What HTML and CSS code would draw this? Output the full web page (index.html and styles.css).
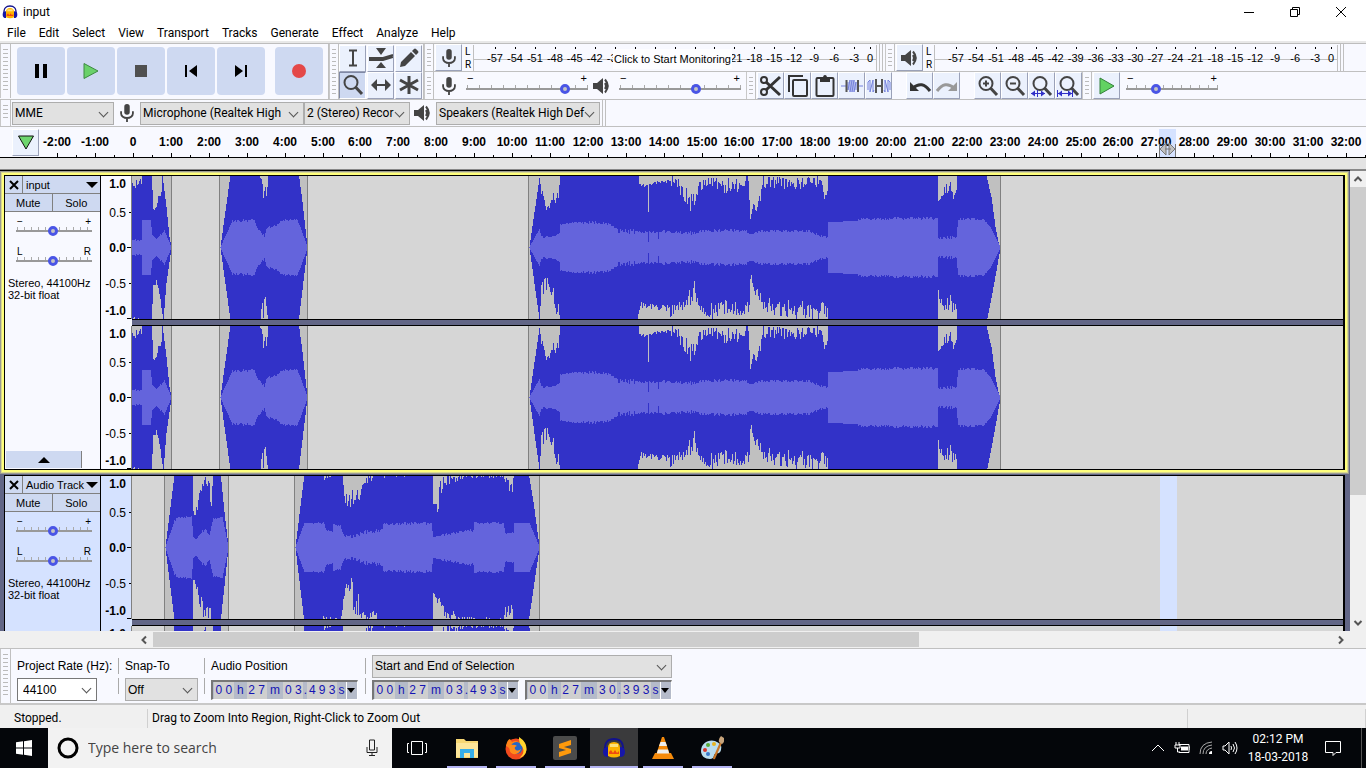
FILE: index.html
```html
<!DOCTYPE html>
<html lang="en">
<head>
<meta charset="utf-8">
<title>input</title>
<link rel="stylesheet" href="styles.css">
</head>
<body>
<svg class="defs" aria-hidden="true">
  <symbol id="mic" viewBox="0 0 20 22"><rect x="7" y="1" width="6" height="12" rx="3" fill="#444"/><path d="M3.500 9v2.500a6.500 5 0 0 0 13 0V9M10 16v5" fill="none" stroke="#444" stroke-width="2"/></symbol>
  <symbol id="speaker" viewBox="0 0 20 20"><path d="M1 7h4l6-5v16l-6-5H1z" fill="#444"/><path d="M13 7q2 3 0 6M13 3.500q5.500 6.500 0 13" fill="none" stroke="#444" stroke-width="2"/></symbol>
  <symbol id="logo" viewBox="0 0 24 24"><path d="M6 20V12q0-6 6-6t6 6v8q-6 3-12 0z" fill="#ffb400"/><path d="M7 16l2-2 2 3 2-3 2 3 2-2v3H7z" fill="#f04a10"/><path d="M8 8h8v3H8z" fill="#ffe27a"/><path d="M3 16C2 5 7 3 12 3s10 2 9 13" fill="none" stroke="#12128c" stroke-width="2"/><path d="M6 11v10q-5 0-5-5t5-5zM18 11v10q5 0 5-5t-5-5z" fill="#1616a8"/></symbol>
  <symbol id="lens" viewBox="0 0 24 24"><circle cx="10" cy="9.500" r="6.500" fill="none" stroke="#444" stroke-width="2"/><path d="M14.500 14l6.500 7" stroke="#444" stroke-width="3"/></symbol>
  <symbol id="play" viewBox="0 0 16 18"><path d="M1 1l14 8-14 8z" fill="#62d262" stroke="#33803a"/></symbol>
</svg>

<header class="titlebar">
  <svg class="title-logo"><use href="#logo"/></svg>
  <span class="title-text">input</span>
  <button class="win" aria-label="Minimize"><svg viewBox="0 0 12 12"><path d="M1 6.500h10" stroke="#000"/></svg></button>
  <button class="win" aria-label="Restore"><svg viewBox="0 0 12 12"><path d="M1.500 3.500h7v7h-7zM3.500 3V1.500h7v7H9" fill="none" stroke="#000"/></svg></button>
  <button class="win" aria-label="Close"><svg viewBox="0 0 12 12"><path d="M1 1l10 10M11 1L1 11" stroke="#000"/></svg></button>
</header>
<nav class="menu">
  <button>File</button><button>Edit</button><button>Select</button><button>View</button><button>Transport</button><button>Tracks</button><button>Generate</button><button>Effect</button><button>Analyze</button><button>Help</button>
</nav>

<section class="upper">
  <div class="bar transport">
    <i class="grip"></i>
    <button class="big" aria-label="Pause"><svg viewBox="0 0 24 24"><path d="M6 5h4v14H6zM14 5h4v14h-4z"/></svg></button>
    <button class="big" aria-label="Play"><svg viewBox="0 0 24 24"><path d="M5 4.500L19 12 5 19.500z" fill="#6ad16a" stroke="#3d8a42"/></svg></button>
    <button class="big" aria-label="Stop"><svg viewBox="0 0 24 24"><path d="M6 6h12v12H6z" fill="#505050"/></svg></button>
    <button class="big" aria-label="Skip to start"><svg viewBox="0 0 24 24"><path d="M6 6h2v12H6zM18 6v12l-8-6z"/></svg></button>
    <button class="big" aria-label="Skip to end"><svg viewBox="0 0 24 24"><path d="M16 6h2v12h-2zM6 6v12l8-6z"/></svg></button>
    <button class="big rec" aria-label="Record"><svg viewBox="0 0 24 24"><circle cx="12" cy="12" r="7" fill="#e44848"/></svg></button>
  </div>
  <div class="bar tools">
    <i class="grip"></i>
    <div class="toolgrid">
      <button class="tb" aria-label="Selection tool"><svg viewBox="0 0 24 24"><path d="M8 4.500h8M8 19.500h8M12 5v14" stroke="#444" stroke-width="2" fill="none"/></svg></button>
      <button class="tb" aria-label="Envelope tool"><svg viewBox="0 0 24 24"><path d="M0 12h14l10-3M0 14h14l10-3" stroke="#444" stroke-width="2" fill="none"/><path d="M7 2h10l-5 7zM7 22h10l-5-6z" fill="#444"/></svg></button>
      <button class="tb" aria-label="Draw tool"><svg viewBox="0 0 24 24"><path d="M3 21l1-5L14 6l4 4L8 20zM15 5l2-2q1-1 2 0l2 2q1 1 0 2l-2 2z" fill="#444"/></svg></button>
      <button class="tb on" aria-label="Zoom tool"><svg><use href="#lens"/></svg></button>
      <button class="tb" aria-label="Time shift tool"><svg viewBox="0 0 24 24"><path d="M6 12h12" stroke="#444" stroke-width="2"/><path d="M8 6v12l-6-6zM16 6v12l6-6z" fill="#444"/></svg></button>
      <button class="tb" aria-label="Multi-tool"><svg viewBox="0 0 24 24"><path d="M12 3v18M3 7l18 10M21 7L3 17" stroke="#444" stroke-width="3"/></svg></button>
    </div>
  </div>
  <div class="stack">
    <div class="line">
      <i class="grip"></i>
      <button class="tb" aria-label="Record meter"><svg class="mid"><use href="#mic"/></svg></button>
      <div class="lr"><span>L</span><span>R</span></div>
      <div class="meter" data-meter><button class="monitor">Click to Start Monitoring</button></div>
      <i class="endcap"></i>
      <i class="grip"></i>
      <button class="tb" aria-label="Playback meter"><svg class="mid"><use href="#speaker"/></svg></button>
      <div class="lr"><span>L</span><span>R</span></div>
      <div class="meter" data-meter></div>
      <i class="endcap"></i>
    </div>
    <div class="line">
      <i class="grip"></i>
      <svg class="ico"><use href="#mic"/></svg>
      <label class="slider wide"><span>−</span><span>+</span><input type="range" value="84" aria-label="Recording volume"></label>
      <svg class="ico"><use href="#speaker"/></svg>
      <label class="slider wide"><span>−</span><span>+</span><input type="range" value="64" aria-label="Playback volume"></label>
      <i class="grip edit-grip"></i>
      <button class="tb" aria-label="Cut"><svg viewBox="0 0 24 24"><g fill="none" stroke="#333" stroke-width="2"><circle cx="5" cy="6" r="3"/><circle cx="5" cy="18" r="3"/><path d="M7 8l14 13M7 16L21 3" stroke-width="3"/></g></svg></button>
      <button class="tb" aria-label="Copy"><svg viewBox="0 0 24 24"><path d="M3 18V2h14" fill="none" stroke="#333" stroke-width="2"/><rect x="7" y="6" width="14" height="16" rx="1" fill="none" stroke="#333" stroke-width="2"/></svg></button>
      <button class="tb" aria-label="Paste"><svg viewBox="0 0 24 24"><rect x="3.500" y="4" width="17" height="18" rx="1" fill="none" stroke="#333" stroke-width="2"/><path d="M7 4h3q0-3 2-3t2 3h3v4H7z" fill="#333"/></svg></button>
      <button class="tb" aria-label="Trim"><svg viewBox="0 0 24 24"><path d="M1 12h6M17 12h6M8 8v8l2-10v12l2-12v12l2-12v12l2-10v8" stroke="#7481dd" stroke-width="1" fill="none"/><path d="M6.500 6v12M18 6v12" stroke="#555" stroke-width="2"/></svg></button>
      <button class="tb" aria-label="Silence"><svg viewBox="0 0 24 24"><path d="M1 16V8l2-2v12l3-12v12l1-2M23 16V8l-2-2v12L18 6v12l-1-2" stroke="#7481dd" fill="none"/><path d="M9 5v14M15 5v14M9 12h6" stroke="#555" stroke-width="2"/></svg></button>
      <span class="gap"></span>
      <button class="tb" aria-label="Undo"><svg viewBox="0 0 24 24"><path d="M5 14Q14 6 22 17" fill="none" stroke="#333" stroke-width="3"/><path d="M2 8v9h9z" fill="#333"/></svg></button>
      <button class="tb" aria-label="Redo"><svg viewBox="0 0 24 24"><path d="M19 14Q10 6 2 17" fill="none" stroke="#999" stroke-width="3"/><path d="M22 8v9h-9z" fill="#999"/></svg></button>
      <span class="gap"></span>
      <button class="tb" aria-label="Zoom in"><svg><use href="#lens"/><path d="M7 9.500h6M10 6.500v6" stroke="#444" stroke-width="2"/></svg></button>
      <button class="tb" aria-label="Zoom out"><svg><use href="#lens"/><path d="M7 9.500h6" stroke="#444" stroke-width="2"/></svg></button>
      <button class="tb" aria-label="Fit selection"><svg><use href="#lens"/><path d="M1 19.500h14M7.500 16v7" stroke="#3030c8"/><path d="M1 19.500l4-3v6zM15 19.500l-4-3v6z" fill="#3030c8"/></svg></button>
      <button class="tb" aria-label="Fit project"><svg><use href="#lens"/><path d="M1 19.500h14M.5 16v7M15.500 16v7" stroke="#3030c8"/><path d="M1 19.500l4-3v6zM15 19.500l-4-3v6z" fill="#3030c8"/></svg></button>
      <i class="grip"></i>
      <button class="tb" aria-label="Play at speed"><svg class="small"><use href="#play"/></svg></button>
      <label class="slider speed"><span>−</span><span>+</span><input type="range" value="30" aria-label="Playback speed"></label>
    </div>
  </div>
</section>

<section class="devices">
  <i class="grip"></i>
  <label class="combo w-host"><select aria-label="Audio host"><option>MME</option></select></label>
  <svg class="ico"><use href="#mic"/></svg>
  <label class="combo w-dev"><select aria-label="Recording device"><option>Microphone (Realtek High</option></select></label>
  <label class="combo w-chan"><select aria-label="Recording channels"><option>2 (Stereo) Recor</option></select></label>
  <svg class="ico"><use href="#speaker"/></svg>
  <label class="combo w-dev"><select aria-label="Playback device"><option>Speakers (Realtek High Def</option></select></label>
  <i class="endcap"></i>
</section>

<section class="timeline">
  <button class="tb pin" aria-label="Pinned play head"><svg viewBox="0 0 24 24"><path d="M4.500 5h15L12 18z" fill="#6ed66e" stroke="#111"/></svg></button>
  <svg class="ruler" id="ruler"></svg>
</section>
<div class="strip"></div>

<main class="workspace">
  <div class="tracks">
    <article class="track focused">
      <div class="panel">
        <div class="head"><button aria-label="Close track"><svg viewBox="0 0 10 10"><path d="M1 1l8 8M9 1L1 9" stroke="#000" stroke-width="2"/></svg></button><button class="name">input<svg viewBox="0 0 12 6"><path d="M0 0h12L6 6z"/></svg></button></div>
        <div class="ms"><button>Mute</button><button>Solo</button></div>
        <label class="slider"><span>−</span><span>+</span><input type="range" value="49" aria-label="Gain"></label>
        <label class="slider"><span>L</span><span>R</span><input type="range" value="49" aria-label="Pan"></label>
        <p>Stereo, 44100Hz<br>32-bit float</p>
        <button class="fold" aria-label="Collapse"><svg viewBox="0 0 12 6"><path d="M0 6h12L6 0z"/></svg></button>
      </div>
      <div class="channels">
        <div class="channel"><svg class="scale"></svg><svg class="wave" data-wave="0"></svg></div>
        <div class="divider"></div>
        <div class="channel"><svg class="scale"></svg><svg class="wave" data-wave="0"></svg></div>
      </div>
    </article>
    <article class="track selected">
      <div class="panel">
        <div class="head"><button aria-label="Close track"><svg viewBox="0 0 10 10"><path d="M1 1l8 8M9 1L1 9" stroke="#000" stroke-width="2"/></svg></button><button class="name">Audio Track<svg viewBox="0 0 12 6"><path d="M0 0h12L6 6z"/></svg></button></div>
        <div class="ms"><button>Mute</button><button>Solo</button></div>
        <label class="slider"><span>−</span><span>+</span><input type="range" value="49" aria-label="Gain"></label>
        <label class="slider"><span>L</span><span>R</span><input type="range" value="49" aria-label="Pan"></label>
        <p>Stereo, 44100Hz<br>32-bit float</p>
      </div>
      <div class="channels">
        <div class="channel"><svg class="scale"></svg><svg class="wave" data-wave="1"></svg></div>
        <div class="divider"></div>
        <div class="channel"><svg class="scale"></svg><svg class="wave" data-wave="1"></svg></div>
      </div>
    </article>
  </div>
  <div class="vscroll">
    <svg viewBox="0 0 10 10"><path d="M1.500 7L5 3.500 8.500 7"/></svg>
    <div class="lane"><div class="vthumb"></div></div>
    <svg viewBox="0 0 10 10"><path d="M1.500 3L5 6.500 8.500 3"/></svg>
  </div>
</main>
<div class="hscroll">
  <svg viewBox="0 0 10 10"><path d="M7 1.500L3.500 5 7 8.500"/></svg>
  <div class="lane"><div class="hthumb"></div></div>
  <svg viewBox="0 0 10 10"><path d="M3 1.500L6.500 5 3 8.500"/></svg>
</div>

<section class="selbar">
  <i class="grip"></i>
  <div class="field rate"><label for="rate">Project Rate (Hz):</label><span class="combo white"><select id="rate"><option>44100</option></select></span></div>
  <i class="sep"></i>
  <div class="field snap"><label for="snap">Snap-To</label><span class="combo"><select id="snap"><option>Off</option></select></span></div>
  <i class="sep"></i>
  <div class="field pos"><span>Audio Position</span><div class="time" data-time="00h27m03.493s"></div></div>
  <i class="sep"></i>
  <div class="field range">
    <label class="combo"><select aria-label="Selection format"><option>Start and End of Selection</option></select></label>
    <div class="pair"><div class="time" data-time="00h27m03.493s"></div><div class="time" data-time="00h27m30.393s"></div></div>
  </div>
</section>
<footer class="status"><span class="state">Stopped.</span><span class="hint">Drag to Zoom Into Region, Right-Click to Zoom Out</span><span class="rest"></span></footer>

<nav class="taskbar">
  <button class="start" aria-label="Start"><svg viewBox="0 0 16 16"><path d="M0 2.300l7-1v6.200H0zM8 1.200L16 0v7.500H8zM0 8.500h7v6.200l-7-1zM8 8.500h8V16l-8-1.200z" fill="#fff"/></svg></button>
  <label class="search">
    <svg class="ring" viewBox="0 0 22 22"><circle cx="11" cy="11" r="9" fill="none" stroke="#000" stroke-width="3"/></svg>
    <input type="text" placeholder="Type here to search" aria-label="Search">
    <svg class="smic" viewBox="0 0 12 18"><path d="M3.500 1h5v10h-5zM1 8v5.500h10V8M6 14v3M3 16.500h6" fill="none" stroke="#222"/></svg>
  </label>
  <button class="app plain" aria-label="Task View"><svg viewBox="0 0 24 24"><path d="M6.500 5.500h11v13h-11zM4 7.500H2.500v9H4M20 7.500h1.500v9H20" fill="none" stroke="#fff"/></svg></button>
  <button class="app" aria-label="File Explorer"><svg viewBox="0 0 24 24"><path d="M1 3h8l2 2h12v17H1z" fill="#f7d774"/><path d="M1 7h22v14H1z" fill="#fde69a"/><path d="M5 22v-9h14v9h-4v-5H9v5z" fill="#37aee8"/></svg></button>
  <button class="app" aria-label="Firefox"><svg viewBox="0 0 24 24"><circle cx="12" cy="13" r="10.500" fill="#f24a1d"/><path d="M2 10Q3 4 6 3l2 3q5-3 9 2 3 5-1 8Q9 20 6 13 3 10 2 10z" fill="#ff8418"/><circle cx="12.500" cy="12" r="6" fill="#2565c7"/><path d="M6 9q5-1 7 1-3 1-2 3 2 3 6 0-2 6-8 5-5-2-3-9z" fill="#ff8c1a"/><path d="M15 1q8 5 7.500 13-1 6-7 8 6-5 3-11-4-4-3.500-10z" fill="#ffd52e"/></svg></button>
  <button class="app" aria-label="Sublime Text"><svg viewBox="0 0 24 24"><rect width="24" height="24" rx="2" fill="#4b4b4b"/><path d="M6 8l12-4v5l-7 2 7 2v4L6 21v-5l7-2-7-2z" fill="#ff9a0c"/></svg></button>
  <button class="app active" aria-label="Audacity"><svg><use href="#logo"/></svg></button>
  <button class="app" aria-label="VLC"><svg viewBox="0 0 24 24"><path d="M4 17h16l3 6H1z" fill="#f58a0b"/><path d="M11 1h2l6 18q-7 3-14 0z" fill="#f58a0b"/><path d="M9.500 6h5l1.500 4H8zM7 13.500h10l1.200 4H5.800z" fill="#eee"/></svg></button>
  <button class="app" aria-label="Paint"><svg viewBox="0 0 24 24"><path d="M1 15C1 7 9 3 15 5q8 3 6 9c-1 4-4 3-6 4s0 5-5 5-9-3-9-8z" fill="#b9dcee"/><circle cx="5" cy="14" r="2" fill="#d9342b"/><circle cx="8" cy="9" r="2" fill="#59ac38"/><circle cx="14" cy="8" r="2" fill="#e8b320"/><circle cx="8" cy="18" r="2" fill="#3a79c9"/><path d="M20 6l2 1-7 16q-2 1-2-1z" fill="#c87628"/><path d="M19 6q-1-3 2-6l3 2q1 4-2 6z" fill="#c7a47c"/></svg></button>
  <div class="tray">
    <svg viewBox="0 0 16 16"><path d="M2 11l6-6 6 6" class="ln"/></svg>
    <svg viewBox="0 0 16 16"><path d="M5 4.500h10v8H5M15 7h1v3M2 2v3M5 2v3M1 5h5v3H1zM3.500 8v4H6" class="ln"/><path d="M7 6.500h7v4H7z" fill="#fff"/></svg>
    <svg viewBox="0 0 16 16"><path d="M2 14Q2 3 14 2M5 14q0-8 9-9M8 14q0-5 6-6" class="ln dim"/><path d="M11 14q0-3 3-3v3z" fill="#fff"/></svg>
    <svg viewBox="0 0 16 16"><path d="M1 6h2l4-4v12l-4-4H1zM9 6q1 2 0 4M11 4q3 4 0 8M13 2q4 6 0 12" class="ln"/></svg>
    <div class="clock"><span>02:12 PM</span><span>18-03-2018</span></div>
    <svg viewBox="0 0 16 16"><path d="M.5 1.500h15v11H11l-3 3v-3H.5z" class="ln"/></svg>
    <i class="peek"></i>
  </div>
</nav>
<script src="app.js"></script>
</body>
</html>
```
FILE: styles.css
```css
* { box-sizing: border-box; }
body { margin: 0; height: 100vh; display: flex; flex-direction: column; overflow: hidden; background: #fff; color: #000; font: 12px/16px Roboto, "Open Sans", sans-serif; }
button, select, input { font: inherit; color: inherit; margin: 0; padding: 0; border: 0; border-radius: 0; background: none; }
button svg, .ico { display: block; }
body > * { flex: none; }
.defs { position: absolute; width: 0; height: 0; }

.titlebar { height: 24px; display: flex; align-items: center; padding-right: 2px; }
.title-logo { width: 16px; height: 16px; margin: 0 5px 0 2px; }
.title-text { flex: 1; }
.win { width: 46px; height: 22px; display: grid; place-items: center; }
.win svg { width: 12px; height: 12px; }
.menu { height: 19px; display: flex; align-items: center; border-bottom: 2px solid #e8e8e8; padding-left: 1px; }
.menu button { padding: 0 7px 0 6px; }

.upper { display: flex; background: #f8f9ff; border-top: 1px solid #bdbdbd; border-bottom: 1px solid #c0c0c0; height: 57px; }
.bar { display: flex; align-items: center; border-right: 1px solid #c0c0c0; }
.grip { flex: none; width: 10px; align-self: stretch; border-left: 1px solid #c8c8c8; border-right: 1px solid #c0c0c0; background: repeating-linear-gradient(#bbb 0 1px, transparent 1px 4px) content-box; padding: 5px 2px; }
.big { width: 48px; height: 48px; margin-right: 2px; border-radius: 4px; background: #ced9f1; display: grid; place-items: center; }
.big svg { width: 24px; height: 24px; }
.transport { padding-bottom: 1px; }
.transport .grip { margin-right: 6px; width: 11px; }
.rec { margin: 0 5px 0 8px; }
.toolgrid { display: grid; grid-template-columns: repeat(3, 28px); grid-template-rows: repeat(2, 27px); }
.tb { flex: none; width: 27px; height: 27px; display: grid; place-items: center; background: #ebf1fd; border: 1px solid #fff; border-right-color: #9aa1b8; border-bottom-color: #9aa1b8; }
.tb svg { width: 24px; height: 24px; }
.tb svg.small { width: 16px; height: 18px; }
.tb svg.mid { width: 20px; height: 20px; }
.tb.on { background: #ced9f1; border-color: #7f88a5 #fff #fff #7f88a5; }
.stack { flex: 1; display: flex; flex-direction: column; }
.line { flex: 1; display: flex; align-items: center; height: 27px; }
.line + .line { border-top: 1px solid #c0c0c0; }
.line .grip { margin-right: 1px; }
.lr { width: 11px; padding-left: 3px; display: flex; flex-direction: column; font-size: 10px; line-height: 13px; }
.meter { position: relative; width: 404px; height: 26px; border-left: 1px solid #c0c0c0; border-right: 1px solid #c0c0c0; padding: 0 0 0 11px; display: flex; background: linear-gradient(#c0c0c0, #c0c0c0) 0 14px / 100% 1px no-repeat; font: 11px/26px "Liberation Sans", sans-serif; }
.meter span { flex: 1; text-align: center; position: relative; }
.meter span:last-child { flex: 0 0 12px; }
.meter span::before { content: ""; position: absolute; top: 2px; left: 50%; width: 1px; height: 2px; background: #000; }
.monitor { position: absolute; z-index: 1; left: 139px; top: 4px; width: 119px; height: 20px; background: #fdfdff; font-size: 11px; line-height: 20px; white-space: nowrap; }
.endcap { width: 4px; align-self: stretch; border: solid #c0c0c0; border-width: 0 1px; margin: 0 2px; }
.ico { flex: none; width: 20px; height: 20px; margin: 0 7px 0 4px; }
.slider { flex: none; position: relative; width: 92px; height: 23px; display: grid; grid-template-columns: 1fr 1fr; padding: 0 1px; font: 11px/10px "Liberation Sans", sans-serif; background: linear-gradient(#999, #999) 0 15px / 100% 2px no-repeat, repeating-linear-gradient(90deg, #aaa 0 1px, transparent 1px 9px) 1px 12px / 100% 4px no-repeat; }
.slider.wide { width: 122px; background: linear-gradient(#999, #999) 0 15px / 100% 2px no-repeat, repeating-linear-gradient(90deg, #aaa 0 1px, transparent 1px 12px) 1px 12px / 100% 4px no-repeat; }
.slider.speed { margin-left: 6px; }
.slider span:nth-child(2) { text-align: right; }
.slider input { position: absolute; left: 0; top: 11px; width: 100%; height: 10px; appearance: none; }
.slider input::-webkit-slider-thumb { appearance: none; width: 10px; height: 10px; border: 3px solid #4a55e6; border-radius: 50%; background: #c4c4c4; }
.line .slider { height: 25px; }
.edit-grip { margin-left: 5px; }
.gap { width: 14px; }

.devices { height: 27px; display: flex; align-items: center; background: #f8f9ff; border-bottom: 1px solid #c0c0c0; }
.devices .grip { width: 11px; margin-right: 1px; }
.combo { display: block; position: relative; height: 23px; border: 1px solid #adadad; background: #e1e1e1; }
.combo select { display: block; width: 100%; height: 100%; appearance: none; padding: 0 14px 0 2px; overflow: hidden; }
.combo::after { content: ""; position: absolute; right: 6px; top: 6px; width: 6px; height: 6px; border: solid #555; border-width: 0 1px 1px 0; transform: rotate(45deg); pointer-events: none; }
.combo.white { background: #fff; border-color: #777; }
.devices .ico { margin: 0 3px; }
.w-host { width: 102px; }
.w-dev { width: 164px; }
.w-chan { width: 106px; }

.timeline { display: flex; background: #f8f9ff; height: 31px; border-bottom: 1px solid #000; padding: 2px 0 0 12px; }
.timeline .ruler { flex: 1; min-width: 0; height: 28px; font: bold 12px "Liberation Sans", sans-serif; }
.strip { height: 12px; background: #e3e3e3; border-bottom: 1px solid #888; }

.workspace { flex: 1; min-height: 0; display: flex; background: #626686; }
.tracks { flex: 1; min-width: 0; overflow: hidden; border-top: 1px solid #000; padding: 4px 5px 0 4px; }
.track { display: flex; border: 1px solid #000; border-right-width: 2px; margin-bottom: 5px; background: #f8f9ff; }
.focused { box-shadow: 0 0 0 2px #ffff7c, 0 0 0 3px #d8d890, 0 0 0 4px #9c9c94; }
.selected, .selected .scale { background: #d5e2ff; }
.panel { flex: none; width: 96px; border-right: 1px solid #000; display: flex; flex-direction: column; font: 11px/12px "Liberation Sans", sans-serif; }
.head, .ms { display: grid; height: 18px; border-bottom: 1px solid #808080; }
.head { grid-template-columns: 18px 1fr; }
.ms { grid-template-columns: 1fr 1fr; }
.head button, .ms button { background: #ced9f1; border-right: 1px solid #808080; }
.head button { display: flex; align-items: center; justify-content: center; }
.head button svg { width: 10px; height: 10px; }
.head .name { justify-content: space-between; padding: 0 2px 0 3px; border-right: 0; white-space: nowrap; }
.head .name svg { width: 12px; height: 6px; }
.ms button:last-child { border-right: 0; }
.panel .slider { width: 76px; margin: 5px 0 2px 11px; height: 23px; background: linear-gradient(#999, #999) 0 13px / 100% 2px no-repeat, repeating-linear-gradient(90deg, #aaa 0 1px, transparent 1px 7px) 1px 10px / 100% 4px no-repeat; font-size: 10px; }
.panel .slider input { top: 9px; }
.panel p { margin: 5px 3px; }
.fold { width: 76px; height: 17px; margin: auto 0 1px 1px; background: #ced9f1; border-right: 1px solid #808080; display: grid; place-items: center; }
.fold svg { width: 12px; height: 6px; }
.channels { flex: 1; min-width: 0; }
.channel { display: flex; height: 143px; }
.scale { flex: none; width: 31px; height: 143px; border-right: 1px solid #808080; background: #f8f9ff; font: 12px "Liberation Sans", sans-serif; }
.scale .b { font-weight: bold; }
.wave { flex: 1; min-width: 0; height: 143px; background: #d6d6d6; }
.divider { height: 7px; margin-left: 31px; background: #626686; border: solid #000; border-width: 1px 0; }
.vscroll { width: 16px; border-top: 1px solid #888; background: #f0f0f0; display: flex; flex-direction: column; align-items: center; padding: 3px 0; }
.vscroll svg, .hscroll svg { flex: none; width: 10px; height: 10px; fill: none; stroke: #555; stroke-width: 2; }
.vscroll .lane { flex: 1; width: 100%; padding: 3px 0; }
.vthumb { height: 72%; background: #cdcdcd; }
.hscroll { height: 17px; background: #f0f0f0; display: flex; align-items: center; padding: 0 20px 0 139px; }
.hscroll .lane { flex: 1; height: 15px; padding: 0 4px; }
.hthumb { height: 100%; width: 65%; background: #cdcdcd; }

.selbar { height: 57px; display: flex; background: #f8f9ff; border-top: 1px solid #c0c0c0; border-bottom: 2px solid #c8c8c8; font: 12px/16px "Liberation Sans", sans-serif; }
.selbar .grip { width: 11px; margin-right: 6px; }
.field { display: grid; grid-template-rows: 24px 23px; align-items: center; padding-top: 5px; align-content: start; white-space: nowrap; }
.rate { width: 95px; }
.rate .combo { width: 80px; }
.rate select { padding-left: 5px; }
.snap { width: 73px; }
.sep { width: 1px; margin: 9px 6px; background: linear-gradient(#aaa, #aaa) 0 0 / 1px 16px no-repeat, linear-gradient(#aaa, #aaa) 0 100% / 1px 16px no-repeat; }
.pos { width: 148px; }
.range { width: 300px; }
.pair { display: flex; justify-content: space-between; }
.time { width: 147px; height: 20px; display: flex; padding: 0 1px; background: #b5bbc9; border: solid #777; border-width: 2px 1px 1px 2px; border-color: #777 #fff #fff #777; color: #1414b4; line-height: 17px; text-align: center; font-size: 12px; }
.time b { font-weight: normal; width: 10px; background: #cfcfcf; }
.time i { font-style: normal; width: 13px; }
.time .m { width: 17px; }
.time .dot { width: 4px; }
.time .s { width: 9px; }
.time button { width: 10px; display: grid; place-items: center; border-left: 1px solid #fff; }
.time button svg { width: 8px; height: 5px; }

.status { height: 23px; display: flex; align-items: center; background: #f0f0f0; line-height: 19px; padding-top: 3px; }
.state { width: 148px; padding-left: 14px; border-right: 1px solid #d0d0d0; }
.hint { flex: 1; padding-left: 4px; }
.rest { width: 179px; height: 19px; border: solid #d0d0d0; border-width: 0 1px; }

.taskbar { height: 40px; display: flex; background: #04060a; color: #fff; }
.start { width: 48px; display: grid; place-items: center; }
.start svg { width: 16px; height: 16px; }
.search { width: 344px; display: flex; align-items: center; background: #f2f2f2; padding: 0 14px 0 9px; }
.search input { flex: 1; min-width: 0; padding-left: 9px; font: 14px/20px "Open Sans", sans-serif; outline: 0; }
.search input::placeholder { color: #444; opacity: 1; }
.ring { width: 22px; height: 22px; }
.smic { width: 12px; height: 18px; }
.app { width: 48px; margin-right: 1px; display: grid; place-items: center; background: linear-gradient(#b4b4f2, #b4b4f2) 50% 100% / 40px 2px no-repeat; }
.app.plain { background: none; width: 50px; }
.app.active { background: linear-gradient(#b4b4f2, #b4b4f2) 0 100% / 100% 2px no-repeat #3a3a3c; }
.app svg { width: 24px; height: 24px; }
.tray { margin-left: auto; display: flex; align-items: center; gap: 8px; }
.tray svg { width: 16px; height: 16px; }
.ln { fill: none; stroke: #fff; }
.dim { stroke: #aaa; }
.clock { display: flex; flex-direction: column; align-items: center; width: 64px; line-height: 18px; }
.clock + svg { margin-left: 7px; }
.peek { width: 5px; height: 40px; margin-left: 12px; border-left: 1px solid #555; }
```
FILE: app.js
```js
const NS = 'http://www.w3.org/2000/svg';
function add(parent, tag, attrs, text) {
  const el = document.createElementNS(NS, tag);
  for (const k in attrs) el.setAttribute(k, attrs[k]);
  if (text !== undefined) el.textContent = text;
  parent.appendChild(el);
  return el;
}

// Time ruler
const MINUTE = 37.9;
const ruler = document.getElementById('ruler');
const minutes = Math.floor((ruler.getBoundingClientRect().width - 94 - 15) / MINUTE);
add(ruler, 'rect', { x: 1120, y: 0, width: 17, height: 28, fill: '#d5e2ff' });
for (let m = -2; m <= minutes; m++) {
  const x = Math.round(94 + m * MINUTE);
  add(ruler, 'rect', { x, y: 24, width: 1, height: 4 });
  add(ruler, 'rect', { x: Math.round(x + MINUTE / 2), y: 26, width: 1, height: 2 });
  add(ruler, 'text', { x, y: 17, 'text-anchor': 'middle' }, m === 0 ? '0' : m + ':00');
}
add(ruler, 'path', { d: 'M1120.500 15v13M1136.500 15v13M1121 20l6-6v12zM1136 20l-6-6v12zM1126 20h6', fill: '#c0c0c0', stroke: '#777' });

// Level meters
document.querySelectorAll('[data-meter]').forEach(meter => {
  for (let db = -57; db <= 0; db += 3) {
    const s = document.createElement('span');
    s.textContent = db;
    meter.appendChild(s);
  }
});

// Amplitude scales
document.querySelectorAll('.scale').forEach(s => {
  [['1.0', 12, 1], ['0.5', 41, 0], ['0.0', 76, 1], ['-0.5', 112, 0], ['-1.0', 139, 1]].forEach(([t, y, bold]) =>
    add(s, 'text', { x: 25, y, 'text-anchor': 'end', class: bold ? 'b' : '' }, t));
  [[36, 2], [71, 4], [107, 2], [142, 4]].forEach(([y, w]) => add(s, 'rect', { x: 30 - w, y, width: w, height: 1 }));
});

// Envelopes: [x, height, jitter after this point]
const clips = [
  [
    { from: 0, to: 39,
      up: [[0,65,8],[9,63,0],[10,75,0],[19,75,0],[21,38,2],[23,37,4],[26,50,4],[29,55,0],[30,72,0],[34,40,0],[37,10,0],[39,0,0]],
      down: [[0,68,5],[9,75,0],[19,75,0],[21,37,4],[25,33,6],[28,52,5],[31,72,0],[34,35,0],[39,0,0]],
      rms: [[0,7,1],[9,7,0],[10,27,0],[18,27,0],[20,12,1],[24,8,1],[28,12,2],[32,17,1],[36,7,0],[39,0,0]] },
    { from: 88, to: 175,
      up: [[88,0,0],[98,72,0],[126,75,0],[128,70,10],[130,57,12],[135,60,0],[136,75,0],[166,75,0],[170,45,0],[175,0,0]],
      down: [[88,0,0],[98,72,0],[128,75,0],[129,62,14],[134,58,0],[136,75,0],[166,75,0],[175,0,0]],
      rms: [[88,0,0],[100,26,2],[122,27,1],[125,18,2],[132,11,2],[135,20,2],[146,22,1],[148,27,1],[165,27,1],[168,20,0],[175,0,0]] },
    { from: 397, to: 868,
      up: [[397,0,0],[407,69,0],[409,56,8],[414,38,4],[417,39,5],[421,50,7],[426,49,0],[428,75,0],[506,75,0],[507,63,3],[515,62,0],[516,35,0],[517,63,3],[538,67,7],[548,62,15],[560,42,14],[566,62,8],[579,67,8],[590,61,10],[606,62,8],[616,68,3],[618,28,0],[622,48,14],[627,44,12],[630,66,9],[658,63,8],[690,67,7],[692,50,5],[695,56,0],[696,75,0],[805,75,0],[806,47,4],[812,55,14],[824,57,0],[825,75,0],[853,75,0],[859,50,0],[863,20,0],[867,0,0],[868,0,0]],
      down: [[397,0,0],[407,71,0],[409,44,12],[416,35,8],[421,47,12],[427,67,0],[428,75,0],[504,75,0],[508,57,4],[538,60,12],[556,52,20],[561,35,15],[566,57,8],[575,66,12],[593,57,10],[606,61,10],[617,57,0],[618,28,6],[624,46,10],[634,58,12],[660,61,13],[680,64,12],[695,60,0],[696,75,0],[805,75,0],[806,44,8],[811,60,18],[823,56,8],[825,75,0],[854,75,0],[860,45,0],[868,0,0]],
      rms: [[397,0,0],[407,18,1],[409,11,2],[417,9,1],[427,14,0],[428,23,1],[448,25,2],[470,24,2],[480,22,2],[485,17,4],[507,15,2],[515,15,0],[516,5,0],[517,15,2],[525,15,0],[526,8,0],[527,16,2],[558,14,3],[564,13,1],[568,16,2],[612,17,2],[618,13,1],[628,16,2],[676,16,2],[689,11,2],[695,10,0],[696,25,0],[725,26,1],[726,28,2],[805,29,1],[806,9,2],[824,10,1],[826,28,2],[851,28,1],[858,20,0],[868,0,0]] }
  ],
  [
    { from: 33, to: 96,
      up: [[33,0,0],[42,72,0],[60,75,0],[61,36,4],[63,34,8],[69,58,10],[76,67,8],[79,42,3],[81,75,0],[88,75,0],[92,35,0],[96,0,0]],
      down: [[33,0,0],[42,72,0],[60,75,0],[61,30,4],[65,45,12],[71,65,12],[78,65,10],[80,72,0],[88,75,0],[96,0,0]],
      rms: [[33,0,0],[42,26,2],[46,30,1],[59,30,1],[61,10,1],[64,8,1],[69,15,2],[73,18,1],[77,12,1],[81,28,1],[90,30,0],[96,0,0]] },
    { from: 163, to: 407,
      up: [[163,0,0],[171,65,0],[172,75,0],[191,75,0],[192,69,4],[198,70,0],[199,75,0],[210,73,0],[212,50,8],[216,46,14],[220,51,14],[228,50,4],[231,69,8],[243,72,4],[300,74,0],[301,43,0],[305,43,26],[310,63,10],[318,68,6],[338,72,4],[371,72,2],[373,64,8],[380,60,9],[382,75,0],[396,75,0],[401,45,0],[407,0,0]],
      down: [[163,0,0],[172,75,0],[191,71,5],[208,75,0],[211,55,8],[213,37,6],[218,43,20],[226,57,16],[232,70,5],[243,66,8],[249,73,3],[300,75,0],[301,43,3],[305,52,12],[312,64,10],[325,71,5],[371,73,3],[373,64,8],[380,61,8],[382,75,0],[396,75,0],[407,0,0]],
      rms: [[163,0,0],[172,24,1],[191,24,2],[194,17,1],[200,15,1],[201,22,1],[208,22,1],[211,12,2],[220,10,3],[230,14,3],[250,17,1],[251,23,2],[299,24,1],[301,10,1],[310,12,2],[341,17,2],[342,24,1],[371,24,1],[373,14,1],[381,14,1],[382,24,0],[397,24,0],[403,10,0],[407,0,0]] }
  ]
];
function hash(n) {
  const v = Math.sin(n * 127.1) * 43758.5453;
  return v - Math.floor(v);
}
function level(points, x, seed) {
  let i = 0;
  while (i < points.length - 2 && points[i + 1][0] <= x) i++;
  const [x0, h0, j] = points[i], [x1, h1] = points[i + 1];
  const h = h0 + (h1 - h0) * Math.min(1, (x - x0) / (x1 - x0)) + (hash(x + seed) - 0.5) * j * 1.5;
  return Math.max(0, Math.min(72, Math.round(h)));
}
function envelope(clip, up, down, seed) {
  let d = '', back = '';
  for (let x = clip.from; x < clip.to; x++) {
    const top = 71 - level(up, x, seed);
    const bottom = 72 + level(down, x, up === down ? seed : seed + 500);
    d += (d ? 'V' + top : 'M' + x + ' ' + top) + 'h1';
    back = 'V' + bottom + 'h-1' + back;
  }
  return d + back + 'z';
}
document.querySelectorAll('[data-wave]').forEach(svg => {
  const k = +svg.dataset.wave;
  if (k === 1) add(svg, 'rect', { x: 1028, y: 0, width: 17, height: 143, fill: '#d5e2ff' });
  clips[k].forEach(c => {
    add(svg, 'rect', { x: c.from, y: 0, width: c.to - c.from, height: 143, fill: '#c0c0c0' });
    add(svg, 'path', { d: envelope(c, c.up, c.down, 7), fill: '#3232c8' });
    add(svg, 'path', { d: envelope(c, c.rms, c.rms, 90), fill: '#6464dc' });
    if (c.from) add(svg, 'rect', { x: c.from - 1, y: 0, width: 1, height: 143, fill: '#808080' });
    add(svg, 'rect', { x: c.to, y: 0, width: 1, height: 143, fill: '#808080' });
  });
});

// Time fields
document.querySelectorAll('[data-time]').forEach(box => {
  for (const ch of box.dataset.time) {
    const digit = ch >= '0' && ch <= '9';
    const el = document.createElement(digit ? 'b' : 'i');
    if (!digit) el.className = ch === '.' ? 'dot' : ch;
    el.textContent = ch;
    box.appendChild(el);
  }
  const btn = document.createElement('button');
  btn.setAttribute('aria-label', 'Time format');
  const icon = add(btn, 'svg', { viewBox: '0 0 8 5' });
  add(icon, 'path', { d: 'M0 0h8L4 5z' });
  box.appendChild(btn);
});
```
